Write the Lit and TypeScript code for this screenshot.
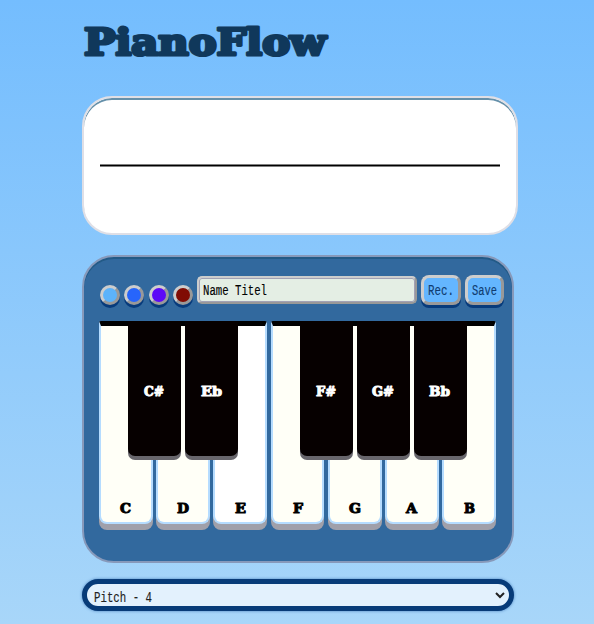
import { LitElement, html, css, svg } from "lit";
import { customElement, property } from "lit/decorators.js";

@customElement("fit-text")
class FitText extends LitElement {
  static styles = css`
    :host { display: block; }
    svg { display: block; overflow: visible; }
    text { fill: currentColor; stroke: currentColor; stroke-width: var(--weight, .15px); stroke-linejoin: round; }
  `;
  @property() text = "";
  @property({ type: Number }) width = 10;
  @property({ type: Number }) height = 10;
  render() {
    return html`<svg width=${this.width} height=${this.height}>${svg`<text x="0" y=${this.height} textLength=${this.width} lengthAdjust="spacingAndGlyphs">${this.text}</text>`}</svg>`;
  }
}

const whiteKeys: [string, number][] = [["C", 11], ["D", 12], ["E", 11], ["F", 10], ["G", 12], ["A", 11], ["B", 11]];
const blackKeys: ([string, number] | null)[] = [["C#", 20], ["Eb", 21], null, ["F#", 20], ["G#", 22], ["Bb", 21]];

@customElement("app-root")
class AppRoot extends LitElement {
  static styles = css`
    :host {
      display: block;
      box-sizing: border-box;
      height: 624px;
      padding: 26px 76px 0 82px;
      overflow: hidden;
      background: linear-gradient(#74bdfe, #a8d6f9);
      font: 14px "Liberation Mono", monospace;
    }
    * { box-sizing: border-box; }
    .title { height: 70px; color: #10385b; font: bold 36.5px "DejaVu Serif", serif; --weight: 3.2px; padding-left: 2px; }
    .wave {
      width: 436px; height: 139px; border: 2px solid #dfdfe6; border-radius: 30px;
      background: #fff; box-shadow: inset 0 2px 0 #6590aa; display: grid; place-items: center;
    }
    .panel {
      width: 432px; height: 308px; margin-top: 20px; padding: 18px 8px 0 16px;
      border: 2px solid #8799ba; border-radius: 32px; background: #32699e;
      box-shadow: inset 0 2px 0 #235a86;
    }
    .tools { display: flex; height: 46px; align-items: flex-start; }
    .dots { display: flex; gap: 4.3px; width: 97px; padding-top: 10px; }
    .dot {
      width: 20px; height: 20px; border: 3px solid; border-color: #cdcdcd #999 #999 #cdcdcd;
      border-radius: 50%; box-shadow: 0 3px 0 #073b7c;
    }
    .sky { background: #5cb3fb; }
    .blue { background: #2765fb; }
    .violet { background: #5d09f7; }
    .red { background: #800c04; }
    .name {
      width: 220px; height: 28px; margin-top: 1px; padding: 6.5px 4px; border: 2px solid;
      border-color: #cdcdcd #999 #999 #cdcdcd; border-radius: 5px; background: #e4eee4;
      box-shadow: inset 0 0 0 1px #a2a2b5; color: #000;
    }
    .btn {
      width: 40px; height: 30px; margin-left: 4px; border: 3px solid;
      border-color: #cdcdcd #999 #999 #cdcdcd; border-radius: 8px; background: #64b6ff;
      box-shadow: 0 3px 0 #073b7c; color: #103c70; padding: 7px 3px 0 4px;
    }
    .save { width: 39px; }
    .keys { position: relative; margin-left: -1px; width: 397px; height: 209px; font: bold 13px "DejaVu Serif", serif; --weight: 1px; }
    .whites { display: flex; gap: 3.5px; }
    .white {
      flex: 1; height: 203px; border: 2px solid #b5dcff; border-top: 5px solid #000;
      border-radius: 2px 2px 8px 8px; background: #fffff7; box-shadow: 0 6px 0 #a0a0aa;
      display: flex; flex-direction: column; align-items: center; justify-content: flex-end; padding-bottom: 9px; color: #000;
    }
    .white.bright { background: #fff; }
    .blacks { position: absolute; left: 29px; top: 0; display: flex; gap: 4.2px; }
    .black { width: 53px; height: 135px; background: #060000; border-radius: 0 0 7px 7px; box-shadow: 0 4px 0 #68666c; display: flex; justify-content: center; padding-top: 64.5px; color: #fff; }
    .black fit-text { margin-left: -1px; }
    .gap { width: 53px; }
    .pitch {
      width: 432px; height: 32px; margin-top: 16px; border: 5px solid #073b78; border-radius: 16px;
      background: #e3f1fd; box-shadow: 0 0 3px #477dbb; display: flex; justify-content: space-between;
      color: #222; padding: 8px 4px 0 7px;
    }
  `;

  render() {
    return html`
      <fit-text class="title" text="PianoFlow" width="242" height="28.5"></fit-text>
      <div class="wave"><svg width="400" height="3"><path d="M0 1.5H400" stroke="#000" stroke-width="2" /></svg></div>
      <div class="panel">
        <div class="tools">
          <div class="dots">${["sky", "blue", "violet", "red"].map((c) => html`<div class="dot ${c}"></div>`)}</div>
          <div class="name"><fit-text text="Name Titel" width="64" height="10"></fit-text></div>
          <div class="btn"><fit-text text="Rec." width="26" height="10"></fit-text></div>
          <div class="btn save"><fit-text text="Save" width="25" height="10"></fit-text></div>
        </div>
        <div class="keys">
          <div class="whites">
            ${whiteKeys.map(([n, w]) => html`<div class="white ${n === "E" ? "bright" : ""}"><fit-text text=${n} width=${w} height="10"></fit-text></div>`)}
          </div>
          <div class="blacks">
            ${blackKeys.map((k) => k
              ? html`<div class="black"><fit-text text=${k[0]} width=${k[1]} height="10"></fit-text></div>`
              : html`<div class="gap"></div>`)}
          </div>
        </div>
      </div>
      <div class="pitch">
        <fit-text text="Pitch - 4" width="58" height="10"></fit-text>
        <svg width="10" height="7"><path d="M1 1L5 5L9 1" fill="none" stroke="#222" stroke-width="2" /></svg>
      </div>
    `;
  }
}
